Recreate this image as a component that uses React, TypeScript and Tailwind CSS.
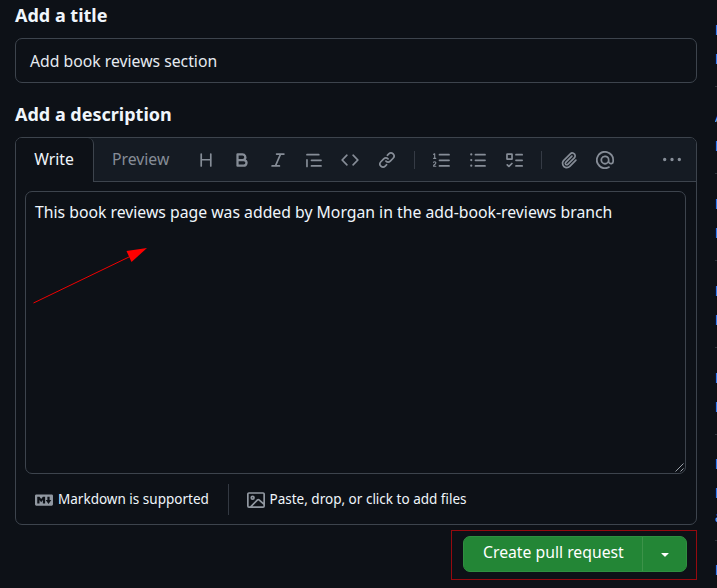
import type { ReactNode } from "react";

const PATHS = {
  heading:
    "M3.75 2a.75.75 0 0 1 .75.75V7h7V2.75a.75.75 0 0 1 1.5 0v10.5a.75.75 0 0 1-1.5 0V8.5h-7v4.75a.75.75 0 0 1-1.5 0V2.75A.75.75 0 0 1 3.75 2Z",
  bold: "M4 2h4.5a3.501 3.501 0 0 1 2.852 5.53A3.499 3.499 0 0 1 9.5 14H4a1 1 0 0 1-1-1V3a1 1 0 0 1 1-1Zm1 7v3h4.5a1.5 1.5 0 0 0 0-3Zm3.5-2a1.5 1.5 0 0 0 0-3H5v3Z",
  italic:
    "M6 2.75A.75.75 0 0 1 6.75 2h6.5a.75.75 0 0 1 0 1.5h-2.505l-3.858 9H9.25a.75.75 0 0 1 0 1.5h-6.5a.75.75 0 0 1 0-1.5h2.505l3.858-9H6.75A.75.75 0 0 1 6 2.75Z",
  quote:
    "M1.75 2.5h10.5a.75.75 0 0 1 0 1.5H1.75a.75.75 0 0 1 0-1.5Zm4 5h8.5a.75.75 0 0 1 0 1.5h-8.5a.75.75 0 0 1 0-1.5Zm0 5h8.5a.75.75 0 0 1 0 1.5h-8.5a.75.75 0 0 1 0-1.5ZM2.5 7.75v6a.75.75 0 0 1-1.5 0v-6a.75.75 0 0 1 1.5 0Z",
  code: "m11.28 3.22 4.25 4.25a.75.75 0 0 1 0 1.06l-4.25 4.25a.749.749 0 0 1-1.275-.326.749.749 0 0 1 .215-.734L13.94 8l-3.72-3.72a.749.749 0 0 1 .326-1.275.749.749 0 0 1 .734.215Zm-6.56 0a.751.751 0 0 1 1.042.018.751.751 0 0 1 .018 1.042L2.06 8l3.72 3.72a.749.749 0 0 1-.326 1.275.749.749 0 0 1-.734-.215L.47 8.53a.75.75 0 0 1 0-1.06Z",
  link: "m7.775 3.275 1.25-1.25a3.5 3.5 0 1 1 4.95 4.95l-2.5 2.5a3.5 3.5 0 0 1-4.95 0 .751.751 0 0 1 .018-1.042.751.751 0 0 1 1.042-.018 1.998 1.998 0 0 0 2.83 0l2.5-2.5a2.002 2.002 0 0 0-2.83-2.83l-1.25 1.25a.751.751 0 0 1-1.042-.018.751.751 0 0 1-.018-1.042Zm-4.69 9.64a1.998 1.998 0 0 0 2.83 0l1.25-1.25a.751.751 0 0 1 1.042.018.751.751 0 0 1 .018 1.042l-1.25 1.25a3.5 3.5 0 1 1-4.95-4.95l2.5-2.5a3.5 3.5 0 0 1 4.95 0 .751.751 0 0 1-.018 1.042.751.751 0 0 1-1.042.018 1.998 1.998 0 0 0-2.83 0l-2.5 2.5a1.998 1.998 0 0 0 0 2.83Z",
  ordered:
    "M5 3.25a.75.75 0 0 1 .75-.75h8.5a.75.75 0 0 1 0 1.5h-8.5A.75.75 0 0 1 5 3.25Zm0 5a.75.75 0 0 1 .75-.75h8.5a.75.75 0 0 1 0 1.5h-8.5A.75.75 0 0 1 5 8.25Zm0 5a.75.75 0 0 1 .75-.75h8.5a.75.75 0 0 1 0 1.5h-8.5a.75.75 0 0 1-.75-.75ZM.924 10.32a.5.5 0 0 1-.851-.525l.001-.001.001-.002.002-.004.007-.011c.097-.144.215-.273.348-.384.228-.19.588-.392 1.068-.392.468 0 .858.181 1.126.484.259.294.377.673.377 1.038 0 .987-.686 1.495-1.156 1.845l-.047.035c-.303.225-.522.4-.654.597h1.357a.5.5 0 0 1 0 1H.5a.5.5 0 0 1-.5-.5c0-1.005.692-1.52 1.167-1.875l.035-.025c.531-.396.8-.625.8-1.078a.57.57 0 0 0-.128-.376C1.806 10.068 1.695 10 1.5 10a.658.658 0 0 0-.429.163.835.835 0 0 0-.144.153ZM2.003 2.5V6h.503a.5.5 0 0 1 0 1H.5a.5.5 0 0 1 0-1h.503V3.308l-.28.14a.5.5 0 0 1-.446-.895l1.003-.5a.5.5 0 0 1 .723.447Z",
  unordered:
    "M5.75 2.5h8.5a.75.75 0 0 1 0 1.5h-8.5a.75.75 0 0 1 0-1.5Zm0 5h8.5a.75.75 0 0 1 0 1.5h-8.5a.75.75 0 0 1 0-1.5Zm0 5h8.5a.75.75 0 0 1 0 1.5h-8.5a.75.75 0 0 1 0-1.5ZM2 14a1 1 0 1 1 0-2 1 1 0 0 1 0 2Zm1-6a1 1 0 1 1-2 0 1 1 0 0 1 2 0ZM2 4a1 1 0 1 1 0-2 1 1 0 0 1 0 2Z",
  tasks:
    "M2 2h4a1 1 0 0 1 1 1v4a1 1 0 0 1-1 1H2a1 1 0 0 1-1-1V3a1 1 0 0 1 1-1Zm4.655 8.595a.75.75 0 0 1 0 1.06L4.03 14.28a.75.75 0 0 1-1.06 0l-1.5-1.5a.749.749 0 0 1 .326-1.275.749.749 0 0 1 .734.215l.97.97 2.095-2.095a.75.75 0 0 1 1.06 0ZM9.75 2.5h5.5a.75.75 0 0 1 0 1.5h-5.5a.75.75 0 0 1 0-1.5Zm0 5h5.5a.75.75 0 0 1 0 1.5h-5.5a.75.75 0 0 1 0-1.5Zm0 5h5.5a.75.75 0 0 1 0 1.5h-5.5a.75.75 0 0 1 0-1.5Zm-7.25-9v3h3v-3Z",
  paperclip:
    "M12.212 3.02a1.753 1.753 0 0 0-2.478.003l-5.83 5.83a3.007 3.007 0 0 0-.88 2.127c0 .795.315 1.551.88 2.116.567.567 1.333.89 2.126.89.79 0 1.548-.321 2.116-.89l5.48-5.48a.75.75 0 0 1 1.061 1.06l-5.48 5.48a4.492 4.492 0 0 1-3.177 1.33c-1.2 0-2.345-.487-3.187-1.33a4.483 4.483 0 0 1-1.32-3.177c0-1.195.475-2.341 1.32-3.186l5.83-5.83a3.25 3.25 0 0 1 5.553 2.297c0 .863-.343 1.691-.953 2.301L7.439 12.39c-.375.377-.884.59-1.416.593a1.998 1.998 0 0 1-1.412-.593 1.992 1.992 0 0 1 0-2.828l5.48-5.48a.751.751 0 0 1 1.042.018.751.751 0 0 1 .018 1.042l-5.48 5.48a.492.492 0 0 0 0 .707.499.499 0 0 0 .352.154.51.51 0 0 0 .356-.154l5.833-5.827a1.755 1.755 0 0 0 0-2.481Z",
  mention:
    "M4.75 2.37a6.501 6.501 0 0 0 6.5 11.26.75.75 0 0 1 .75 1.298A7.999 7.999 0 0 1 .989 4.148 8 8 0 0 1 16 7.75v1.5a2.75 2.75 0 0 1-5.072 1.475 3.999 3.999 0 0 1-6.65-4.19A4 4 0 0 1 12 8v1.25a1.25 1.25 0 0 0 2.5 0V7.867a6.5 6.5 0 0 0-9.75-5.496ZM10.5 8a2.5 2.5 0 1 0-5 0 2.5 2.5 0 0 0 5 0Z",
  kebab:
    "M8 9a1.5 1.5 0 1 0 0-3 1.5 1.5 0 0 0 0 3ZM1.5 9a1.5 1.5 0 1 0 0-3 1.5 1.5 0 0 0 0 3Zm13 0a1.5 1.5 0 1 0 0-3 1.5 1.5 0 0 0 0 3Z",
  markdown:
    "M14.85 3c.63 0 1.15.52 1.14 1.15v7.7c0 .63-.51 1.15-1.15 1.15H1.15C.52 13 0 12.48 0 11.84V4.15C0 3.52.52 3 1.15 3ZM9 11V5H7L5.5 7 4 5H2v6h2V8l1.5 1.92L7 8v3Zm2.99.5L14.5 8H13V5h-2v3H9.5Z",
  image:
    "M16 13.25A1.75 1.75 0 0 1 14.25 15H1.75A1.75 1.75 0 0 1 0 13.25V2.75C0 1.784.784 1 1.75 1h12.5c.966 0 1.75.784 1.75 1.75ZM1.75 2.5a.25.25 0 0 0-.25.25v10.5c0 .138.112.25.25.25h.94l.03-.03 6.077-6.078a1.75 1.75 0 0 1 2.412-.06L14.5 10.31V2.75a.25.25 0 0 0-.25-.25Zm12.5 11a.25.25 0 0 0 .25-.25v-.917l-4.298-3.889a.25.25 0 0 0-.344.009L4.81 13.5ZM7 6a2 2 0 1 1-3.999.001A2 2 0 0 1 7 6ZM5.5 6a.5.5 0 1 0-1 0 .5.5 0 0 0 1 0Z",
  caret:
    "m4.427 7.427 3.396 3.396a.25.25 0 0 0 .354 0l3.396-3.396A.25.25 0 0 0 11.396 7H4.604a.25.25 0 0 0-.177.427Z",
};

type IconName = keyof typeof PATHS;

function Icon({ name, className = "size-[18px]" }: { name: IconName; className?: string }) {
  return (
    <svg viewBox="0 0 16 16" fill="currentColor" className={`shrink-0 ${className}`} aria-hidden>
      <path fillRule={name === "tasks" ? "evenodd" : "nonzero"} d={PATHS[name]} />
    </svg>
  );
}

function Label({ children }: { children: ReactNode }) {
  return <h2 className="text-[18px] leading-6 font-bold text-[#f0f6fc]">{children}</h2>;
}

function Divider() {
  return <span className="h-[18px] w-px bg-[#3d444d]/80" />;
}

function Toolbar() {
  const groups: IconName[][] = [
    ["heading", "bold", "italic", "quote", "code", "link"],
    ["ordered", "unordered", "tasks"],
    ["paperclip", "mention"],
  ];
  return (
    <div className="flex flex-1 items-center gap-[18.1px] border-b border-[#3d444d] bg-[#151b23] pr-[15.5px] pl-[18px] text-[#868d97]">
      <span className="mr-[9px] w-[58px] text-[15.75px] whitespace-nowrap">Preview</span>
      {groups.map((group, i) => (
        <div key={group[0]} className="flex items-center gap-[18.1px]">
          {i > 0 && <Divider />}
          {group.map((name) => (
            <Icon key={name} name={name} />
          ))}
        </div>
      ))}
      <Icon name="kebab" className="ml-auto size-[18px]" />
    </div>
  );
}

/* The neighbouring column is cut off by the window's edge. */
function Aside() {
  const groups = ["LL", "AL", "LL", "LL", "LL"];
  return (
    <aside className="h-[588px] w-[2px] overflow-hidden text-[14px] leading-[29px] text-[#74b0ff]">
      {groups.map((letters, i) => (
        <div key={i} className="h-[87px] border-b border-[#3d444d]/70 pt-[15px]">
          {letters.split("").map((letter, j) => (
            <div key={j}>{letter}</div>
          ))}
        </div>
      ))}
      <div className="h-[106px] border-b border-[#3d444d]/70 pt-[14px]">
        <div>L</div>
        <div className="h-6">L</div>
        <div className="h-6">a</div>
      </div>
      <div className="pt-[14px]">L</div>
    </aside>
  );
}

export default function App() {
  return (
    <div className="flex h-[588px] w-[717px] justify-between overflow-hidden bg-[#0d1117] font-['Noto_Sans',sans-serif] text-[#f0f6fc]">
      <main className="ml-[15px] flex w-[682.4px] flex-col pt-[3px]">
        <Label>Add a title</Label>
        <div className="mt-[11px] flex h-[45px] items-center rounded-[7px] border border-[#3d444d] px-[14px] pt-px text-[15.75px] leading-6 text-[#e6ebf1]">
          Add book reviews section
        </div>
        <div className="mt-[19px]">
          <Label>Add a description</Label>
        </div>
        <section className="mt-[11px] flex h-[388px] flex-col rounded-[7px] border border-[#3d444d]">
          <div className="flex h-11 overflow-hidden rounded-t-[6px] bg-[#151b23]">
            <div className="flex w-[78px] items-center justify-center rounded-tr-[6px] border-r border-[#3d444d] bg-[#0d1117] pr-px pb-px text-[15.75px]">
              Write
            </div>
            <Toolbar />
          </div>
          <div className="relative mr-[10.5px] ml-[9px] mt-[9px] h-[283px] rounded-[7px] border border-[#3d444d] px-[9px] pt-[8px] text-[15.77px] leading-6 whitespace-nowrap">
            This book reviews page was added by Morgan in the add-book-reviews branch
            <svg className="absolute right-px bottom-px size-[9px] text-[#9aa0a8]" viewBox="0 0 9 9" fill="none" stroke="currentColor">
              <path d="M0.5 8.5 8.5 0.5M5.5 8.5 8.5 5.5" />
            </svg>
            <svg className="absolute top-[55px] left-[6px] h-[58px] w-[116px]" viewBox="0 0 116 58">
              <path d="M1.5 56 98 9.5" stroke="#f00000" strokeWidth="1" />
              <path d="M115 1 94.5 4 99.5 15Z" fill="#ff0000" />
            </svg>
          </div>
          <footer className="flex flex-1 items-center pt-px pl-[19px] text-[13.53px]">
            <Icon name="markdown" className="size-[18px] text-[#9198a1]" />
            <span className="ml-[5px] w-[151px] whitespace-nowrap">Markdown is supported</span>
            <span className="ml-[18.5px] h-[31px] w-px bg-[#3d444d]/80" />
            <Icon name="image" className="ml-[18px] size-[18px] text-[#9198a1]" />
            <span className="ml-[5px] whitespace-nowrap">Paste, drop, or click to add files</span>
          </footer>
        </section>
        <div className="mt-[5px] flex h-[50px] w-[246px] items-start self-end border border-[#960a0f] pt-[5px] pl-[11px]">
          <div className="flex h-9 w-[224px] overflow-hidden rounded-[7px] border border-[#2f8f40] bg-[#238636] text-white">
            <button className="w-[179px] border-r border-[#3c9349] pb-[2px] text-[15.75px] whitespace-nowrap">
              Create pull request
            </button>
            <button className="flex flex-1 items-center justify-center">
              <Icon name="caret" className="size-4" />
            </button>
          </div>
        </div>
      </main>
      <Aside />
    </div>
  );
}
